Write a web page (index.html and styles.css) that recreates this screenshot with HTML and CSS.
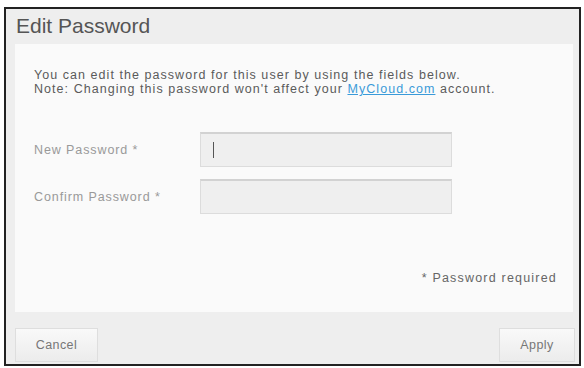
FILE: index.html
```html
<!DOCTYPE html>
<html>
<head>
<meta charset="utf-8">
<link rel="stylesheet" href="styles.css">
</head>
<body>
<div class="dialog">
  <div class="header">Edit Password</div>
  <div class="panel">
    <p class="intro">You can edit the password for this user by using the fields below.<br>Note: Changing this password won't affect your <a class="link" href="#">MyCloud.com</a> account.</p>
    <div class="row">
      <label class="label">New Password *</label>
      <div class="input"><span class="caret"></span></div>
    </div>
    <div class="row">
      <label class="label">Confirm Password *</label>
      <div class="input"></div>
    </div>
    <div class="required">* Password required</div>
  </div>
  <div class="footer">
    <button class="btn btn-cancel">Cancel</button>
    <button class="btn btn-apply">Apply</button>
  </div>
</div>
</body>
</html>
```

FILE: styles.css
```css
html, body {
  margin: 0;
  padding: 0;
  background: #ffffff;
}
body {
  font-family: "Liberation Sans", Arial, sans-serif;
}
.dialog {
  margin: 7px 3px 0 4px;
  height: 355px;
  border: 2px solid #222;
  background: #eeeeee;
  display: flex;
  flex-direction: column;
}
.header {
  height: 35px;
  padding-left: 10px;
  font-size: 21px;
  line-height: 33px;
  color: #555;
}
.panel {
  margin: 0 6px 0 9px;
  height: 268px;
  background: #fafafa;
  box-sizing: border-box;
  padding: 24px 16px 0 19px;
  display: flex;
  flex-direction: column;
}
.intro {
  margin: 0 0 36px 0;
  font-size: 12.5px;
  line-height: 14px;
  letter-spacing: 1.05px;
  color: #5a5a5a;
}
.link {
  color: #3a9ad9;
  text-decoration: underline;
}
.row {
  display: flex;
  align-items: center;
  margin-bottom: 12px;
}
.label {
  width: 166px;
  font-size: 12.5px;
  letter-spacing: 0.9px;
  color: #999;
}
.input {
  width: 252px;
  height: 35px;
  box-sizing: border-box;
  background: #efefef;
  border: 1px solid #dcdcdc;
  border-top: 2px solid #d2d2d2;
  display: flex;
  align-items: center;
  padding-left: 12px;
}
.caret {
  width: 1px;
  height: 16px;
  background: #555;
}
.required {
  margin-top: 45px;
  text-align: right;
  font-size: 12.5px;
  letter-spacing: 1.2px;
  color: #666;
}
.footer {
  flex: 1;
  display: flex;
  justify-content: space-between;
  align-items: flex-end;
  padding: 0 4px 2px 9px;
}
.btn {
  font-family: "Liberation Sans", Arial, sans-serif;
  font-size: 12.5px;
  letter-spacing: 0.4px;
  color: #777;
  height: 34px;
  background: linear-gradient(#f9f9f9, #ececec);
  border: 1px solid #dedede;
  padding: 0;
}
.btn-cancel {
  width: 83px;
}
.btn-apply {
  width: 76px;
}
```
